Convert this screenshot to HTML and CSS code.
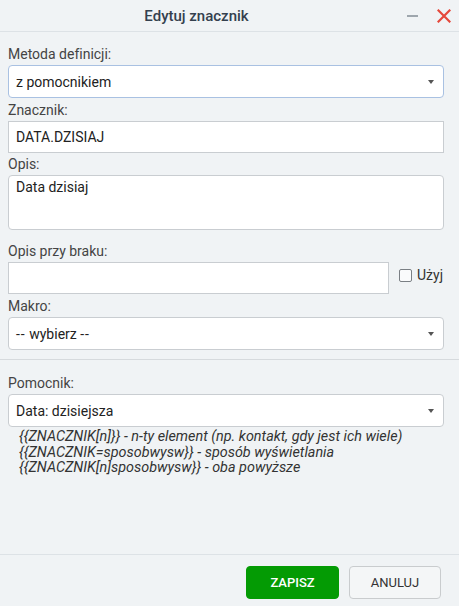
FILE: index.html
```html
<!DOCTYPE html>
<html lang="pl">
<head>
<meta charset="utf-8">
<title>Edytuj znacznik</title>
<link rel="stylesheet" href="styles.css">
</head>
<body>
<div class="dialog">
  <header class="titlebar">
    <div class="title">Edytuj znacznik</div>
    <div class="win-actions">
      <span class="minimize"></span>
      <svg class="close" width="14" height="14" viewBox="0 0 14 14"><path d="M1.5 1.5 L12.5 12.5 M12.5 1.5 L1.5 12.5" stroke="#e5483b" stroke-width="2.2" stroke-linecap="square"/></svg>
    </div>
  </header>

  <main class="content">
    <div class="fields">
      <div class="group g1">
        <div class="label">Metoda definicji:</div>
        <div class="select focused"><span>z pomocnikiem</span><i class="caret"></i></div>
      </div>
      <div class="group g2">
        <div class="label">Znacznik:</div>
        <div class="input"><span>DATA.DZISIAJ</span></div>
      </div>
      <div class="group g3">
        <div class="label">Opis:</div>
        <div class="textarea">Data dzisiaj</div>
      </div>
      <div class="group g4">
        <div class="label">Opis przy braku:</div>
        <div class="row">
          <div class="input grow"></div>
          <label class="check"><span class="box"></span>Użyj</label>
        </div>
      </div>
      <div class="group g5">
        <div class="label">Makro:</div>
        <div class="select"><span><span class="dashes">--</span> wybierz <span class="dashes">--</span></span><i class="caret"></i></div>
      </div>
    </div>

    <hr class="sep">

    <div class="fields">
      <div class="group g6">
        <div class="label">Pomocnik:</div>
        <div class="select"><span>Data: dzisiejsza</span><i class="caret"></i></div>
      </div>
      <div class="help">
        <div>{{ZNACZNIK[n]}} - n-ty element (np. kontakt, gdy jest ich wiele)</div>
        <div>{{ZNACZNIK=sposobwysw}} - sposób wyświetlania</div>
        <div>{{ZNACZNIK[n]sposobwysw}} - oba powyższe</div>
      </div>
    </div>
  </main>

  <footer class="footer">
    <button class="btn primary">ZAPISZ</button>
    <button class="btn">ANULUJ</button>
  </footer>
</div>
</body>
</html>
```

FILE: styles.css
```css
* { box-sizing: border-box; }
html, body { margin: 0; padding: 0; }
body {
  background: #f0f3f5;
  font-family: Roboto, "Liberation Sans", Arial, sans-serif;
  color: #222;
  font-size: 14px;
  font-variant-ligatures: none;
}
.dialog {
  height: 606px;
  display: flex;
  flex-direction: column;
}
.titlebar {
  height: 32px;
  border-bottom: 1px solid #dde2e6;
  display: flex;
  align-items: center;
  flex: none;
}
.title {
  flex: 1;
  text-align: center;
  font-size: 15px;
  font-weight: 500;
  color: #34404e;
}
.win-actions {
  width: 66px;
  display: flex;
  align-items: center;
  padding-left: 14px;
  gap: 19px;
}
.minimize {
  display: block;
  width: 11px;
  height: 2px;
  background: #9ea6ad;
}
.close { display: block; }

.content {
  flex: 1;
}
.fields {
  padding: 0 15px 0 8px;
}
.label {
  line-height: 19px;
  margin-bottom: 1px;
  color: #444;
}
.g1 { padding-top: 13px; }
.g2 { margin-top: 3px; }
.g3 { margin-top: 2px; }
.g4 { margin-top: 12px; }
.g5 { margin-top: 3px; }
.g6 { padding-top: 14px; }

.select, .input, .textarea {
  background: #fff;
  border: 1px solid #c9cdd1;
  font-size: 14px;
  color: #222;
}
.select {
  height: 33px;
  border-radius: 4px;
  display: flex;
  align-items: center;
  padding: 0 8px 0 7px;
}
.select > span { flex: 1; }
.dashes { letter-spacing: 1px; }
.select.focused { border-color: #a9c1e2; }
.caret {
  width: 0; height: 0;
  border-left: 3.5px solid transparent;
  border-right: 3.5px solid transparent;
  border-top: 4px solid #555;
  margin-right: 1px;
}
.input {
  height: 32px;
  display: flex;
  align-items: center;
  padding: 0 7px;
}
.textarea {
  height: 55px;
  border-radius: 4px;
  padding: 2px 7px;
  line-height: 18px;
}
.row {
  display: flex;
  align-items: flex-start;
}
.grow { flex: 1; }
.check {
  width: 55px;
  display: flex;
  align-items: center;
  padding-left: 10px;
  margin-top: 4px;
  gap: 5px;
  color: #333;
  line-height: 18px;
}
.box {
  width: 13px;
  height: 13px;
  border: 1px solid #7a7f84;
  border-radius: 2px;
  background: #fafbfc;
}
.sep {
  border: 0;
  border-top: 1px solid #d6dadd;
  margin: 9px 0 0 0;
  height: 0;
}
.help {
  margin-top: 2px;
  padding-left: 11px;
  font-style: italic;
  font-size: 14.4px;
  line-height: 15.5px;
  color: #333;
}
.footer {
  flex: none;
  height: 52px;
  border-top: 1px solid #dde2e6;
  display: flex;
  justify-content: flex-end;
  align-items: flex-start;
  padding: 11px 18px 0 0;
  gap: 10px;
}
.btn {
  height: 33px;
  width: 92px;
  border: 1px solid #c9ccce;
  border-radius: 4px;
  background: #f4f6f7;
  font-family: Roboto, "Liberation Sans", Arial, sans-serif;
  font-size: 13px;
  color: #333;
}
.btn.primary {
  width: 93px;
  background: #049b04;
  border-color: #049b04;
  color: #fff;
  font-weight: 500;
}
```
